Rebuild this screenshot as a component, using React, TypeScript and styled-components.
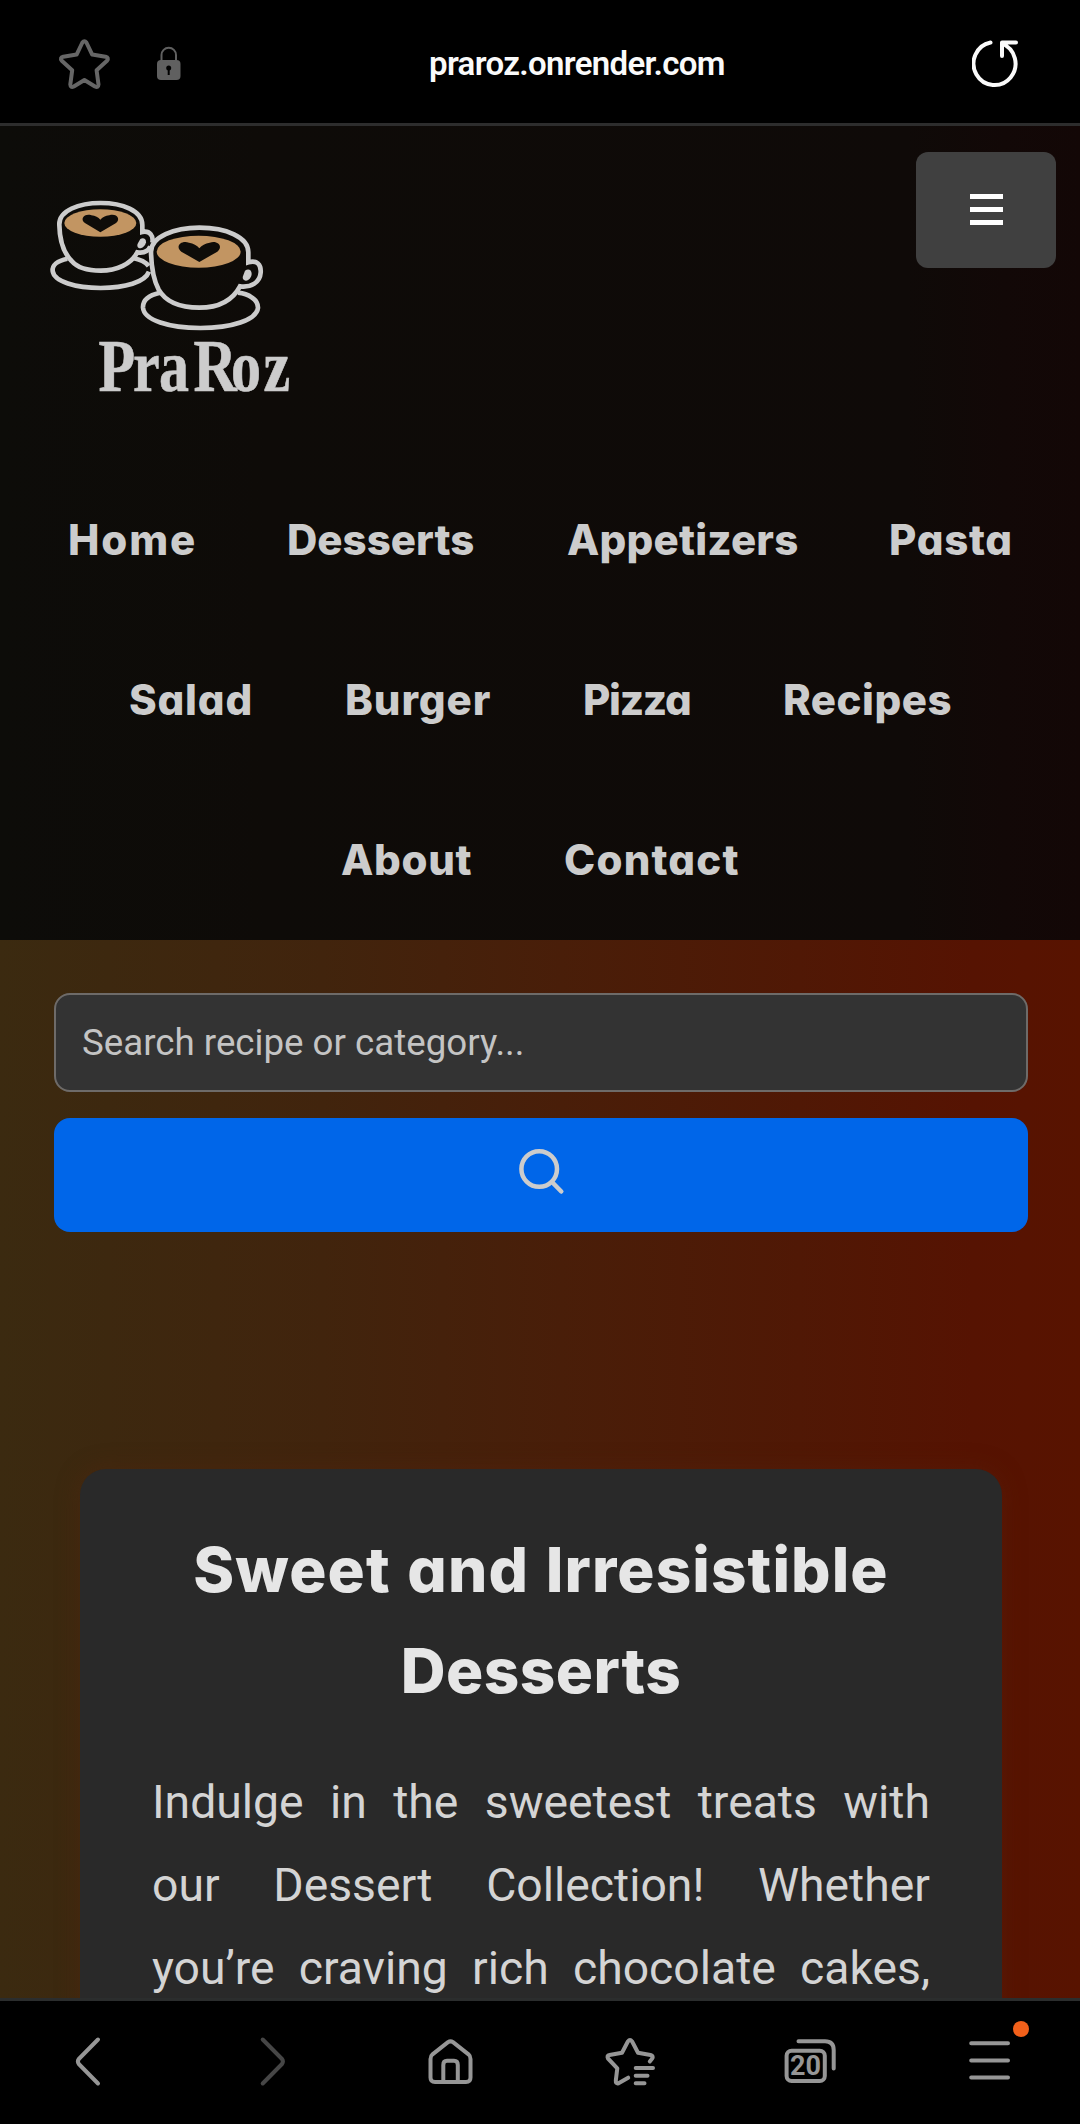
import React from 'react';
import styled, { createGlobalStyle } from 'styled-components';

const Global = createGlobalStyle`
  * { box-sizing: border-box; }
  body { margin: 0; background: #000; font-family: Roboto, sans-serif; }
`;

const Screen = styled.div`
  width: 1080px; height: 2124px; overflow: hidden;
  display: flex; flex-direction: column; background: #000;
`;

const AddressBar = styled.header`
  height: 126px; flex: none; display: grid;
  grid-template-columns: 156px 198px 1fr 198px;
  align-items: center; border-bottom: 3px solid #2d2d2d;
`;
const StarCell = styled.span`display: flex; padding: 4px 0 0 56px;`;
const LockCell = styled.span`display: flex; padding-top: 4px;`;
const Url = styled.div`
  padding-left: 75px; padding-top: 4px; white-space: nowrap;
  font: 600 33px/40px Roboto, sans-serif; color: #fafafa; letter-spacing: -0.65px;
`;
const ReloadCell = styled.span`display: flex; padding: 3px 0 0 90px;`;

const Page = styled.main`
  flex: 1; min-height: 0; overflow: hidden;
  background: linear-gradient(90deg, #3b2a10 0%, #41240d 30%, #491e09 52%, #501805 74%, #561302 90%, #581300 100%);
`;
const SiteHeader = styled.section`
  height: 814px; display: flex; flex-direction: column;
  background: linear-gradient(90deg, #0d0c09 0%, #0e0b08 25%, #0f0a08 84%, #120807 93%, #130706 100%);
`;
const Brand = styled.div`
  display: flex; justify-content: space-between; align-items: flex-start;
  height: 334px; padding: 26px 24px 0 30px;
`;
const LogoWrap = styled.div`padding-top: 28px;`;
const MenuButton = styled.button`
  width: 140px; height: 116px; border: 0; border-radius: 12px; background: #404040;
  display: flex; flex-direction: column; align-items: center; gap: 8px; padding: 42px 0 0;
`;
const MenuLine = styled.span`width: 33px; height: 5px; background: #fff;`;

const Nav = styled.nav`display: flex; flex-direction: column;`;
const NavRow = styled.div<{ $left: number }>`
  display: flex; height: 160px; align-items: center; padding-left: ${p => p.$left}px;
`;
const NavLink = styled.a<{ $w: number; $ls?: number }>`
  width: ${p => p.$w}px; flex: none; white-space: nowrap; color: #cccccc;
  font: 800 42px/64px Inter, sans-serif; font-feature-settings: "cv11";
  letter-spacing: ${p => p.$ls ?? 0}px;
`;

const Search = styled.form`
  display: flex; flex-direction: column; gap: 26px; padding: 53px 52px 0 54px;
`;
const Input = styled.input`
  width: 100%; height: 99px; border: 2px solid #6e6b69; border-radius: 16px;
  background: #333; padding: 0 26px; color: #ccc; outline: none;
  font: 400 36.7px/44px Roboto, sans-serif;
  &::placeholder { color: #c4c4c4; opacity: 1; }
`;
const SearchButton = styled.button`
  height: 114px; border: 0; border-radius: 16px; background: #0066e9;
  display: flex; justify-content: center; padding: 28px 0 0;
`;

const Card = styled.article`
  margin: 237px 78px 0 80px; height: 560px; border-radius: 26px 26px 0 0;
  background: #292929; padding: 50px 72px 0; box-shadow: 0 0 24px rgba(90, 38, 16, 0.4);
`;
const Title = styled.h2`
  margin: 0; text-align: center; color: #e6e6e6; white-space: nowrap;
  font: 800 62px/101px Inter, sans-serif; font-feature-settings: "cv11"; letter-spacing: 0.5px;
`;
const TitleLead = styled.span`letter-spacing: 1.1px; word-spacing: 2px;`;
const Copy = styled.p`margin: 40px 0 0; color: #d4d4d4; font: 400 46.3px/83px Roboto, sans-serif;`;
const Line = styled.span`display: block; text-align: justify; text-align-last: justify; white-space: nowrap;`;

const Toolbar = styled.footer`
  height: 126px; flex: none; border-top: 3px solid #2b2d2d; display: grid;
  grid-template-columns: repeat(6, 180px); align-items: start; padding-top: 30px;
`;
const ToolSlot = styled.span<{ $color?: string }>`
  position: relative; display: flex; justify-content: center; color: ${p => p.$color ?? '#969696'};
`;
const Notice = styled.i`
  position: absolute; left: 113px; top: -10px; width: 16px; height: 16px;
  border-radius: 50%; background: #f2601a;
`;

function ToolIcon({ children }: { children: React.ReactNode }) {
  return (
    <svg width="60" height="60" viewBox="0 0 60 60" fill="none" stroke="currentColor" strokeWidth="4" strokeLinecap="round" strokeLinejoin="round">
      {children}
    </svg>
  );
}

function Logo() {
  return (
    <svg width="290" height="230" viewBox="0 0 870 690" fill="none" stroke="#ccc" strokeWidth="14">
      <path d="M112 236C82 242 66 256 68 273C72 305 138 324 212 324C285 324 345 307 357 275M308 234C330 238 347 246 356 258" />
      <path d="M88 135C86 91 148 69 212 69C277 69 337 92 337 135V156C360 151 371 168 367 188M88 135C89 190 107 225 125 243C142 263 176 272 212 272C260 272 304 252 322 217C344 220 356 211 361 199" />
      <path d="M331 177c9-5 18 0 17 10-1 9-8 16-16 18-8 1-12-7-9-14z" fill="#ccc" stroke="none" />
      <ellipse cx="211" cy="129" rx="108" ry="41" fill="#c29562" stroke="none" />
      <path d="M211 157L166 130C147 118 164 99 184 106Q202 108 211 119Q220 108 238 106C260 99 274 118 257 130Z" fill="#0e0c09" stroke="none" />
      <path d="M390 338C357 345 338 361 339 383C342 421 417 444 511 444C604 444 680 420 684 383C684 359 656 341 624 338" />
      <path d="M363 216C362 171 433 143 508 143C588 143 656 171 655 218V247C680 239 694 253 692 278C690 307 664 323 630 319C612 353 577 383 508 383C444 383 406 364 386 329C372 302 364 266 363 216Z" />
      <path d="M645 272c10-7 20-2 20 9 0 10-8 20-17 21-9 0-12-8-8-16z" fill="#ccc" stroke="none" />
      <ellipse cx="506" cy="215" rx="126" ry="48" fill="#c29562" stroke="none" />
      <path d="M508 246L454 215C435 201 451 180 477 188Q497 191 508 205Q519 191 539 188C565 180 580 201 562 215Z" fill="#0e0c09" stroke="none" />
      <text transform="scale(0.8 1)" x="257 386 484 613 754 876" y="633" fill="#ccc" stroke="#ccc" strokeWidth="2" fontFamily="Liberation Serif, serif" fontWeight="700" fontSize="225">PraRoz</text>
    </svg>
  );
}

const navRows = [
  { left: 68, items: [['Home', 219, 1.9], ['Desserts', 280, 0], ['Appetizers', 322, 0.2], ['Pasta', 130, 0.7]] },
  { left: 129, items: [['Salad', 216, 0.8], ['Burger', 238, 0.9], ['Pizza', 200, -1.3], ['Recipes', 180, 0.5]] },
  { left: 341, items: [['About', 223, 0.7], ['Contact', 190, 1.2]] },
] as { left: number; items: [string, number, number?][] }[];

export default function App() {
  return (
    <Screen>
      <Global />
      <AddressBar>
        <StarCell>
          <svg width="56" height="56" viewBox="0 0 56 56" fill="none" stroke="#666" strokeWidth="4" strokeLinejoin="round">
            <path d="M26.400 6.500Q28.400 3.800 30.400 6.500L36.200 18.600L49.500 20.700Q53.300 21.800 51 24.700L40.600 34.200L42.500 48.500Q42.300 52 39 50.500L28.400 44L17.800 50.500Q14.500 52 14.300 48.500L16.200 34.200L5.800 24.700Q3.500 21.800 7.300 20.700L20.600 18.600Z" />
          </svg>
        </StarCell>
        <LockCell>
          <svg width="26" height="36" viewBox="0 0 26 36"><path d="M5.500 15V9a7.200 7.200 0 0 1 14.500 0v6" fill="none" stroke="#606060" strokeWidth="2" /><rect x="1" y="14" width="23.500" height="20" rx="4" fill="#606060" /><circle cx="12.700" cy="22" r="2.500" /><path d="M11.700 22h2v7h-2z" /></svg>
        </LockCell>
        <Url>praroz.onrender.com</Url>
        <ReloadCell>
          <svg width="48" height="50" viewBox="0 0 48 50" fill="none" stroke="#fafafa" strokeWidth="4" strokeLinecap="round" strokeLinejoin="round"><path d="M18.500 4.500A21 21.500 0 1 0 30 5.500M30 18V4.500H44" /></svg>
        </ReloadCell>
      </AddressBar>
      <Page>
        <SiteHeader>
          <Brand>
            <LogoWrap><Logo /></LogoWrap>
            <MenuButton aria-label="Menu"><MenuLine /><MenuLine /><MenuLine /></MenuButton>
          </Brand>
          <Nav>
            {navRows.map(r => (
              <NavRow key={r.left} $left={r.left}>
                {r.items.map(([t, w, ls]) => <NavLink key={t} $w={w} $ls={ls}>{t}</NavLink>)}
              </NavRow>
            ))}
          </Nav>
        </SiteHeader>
        <Search>
          <Input placeholder="Search recipe or category..." />
          <SearchButton type="button" aria-label="Search">
            <svg width="48" height="50" viewBox="0 0 48 50" fill="none" stroke="#ccc" strokeWidth="4.500" strokeLinecap="round"><circle cx="22.200" cy="23" r="17.800" /><path d="M35 36L44.300 45.500" /></svg>
          </SearchButton>
        </Search>
        <Card>
          <Title><TitleLead>Sweet and Irresistible</TitleLead><br />Desserts</Title>
          <Copy>
            <Line>Indulge in the sweetest treats with</Line>
            <Line>our Dessert Collection! Whether</Line>
            <Line>you’re craving rich chocolate cakes,</Line>
          </Copy>
        </Card>
      </Page>
      <Toolbar>
        <ToolSlot><ToolIcon><path d="M38 8.500L18.800 28Q17 30.500 18.800 33L38 52.500" /></ToolIcon></ToolSlot>
        <ToolSlot $color="#464646"><ToolIcon><path d="M22.700 8.500L42 28Q43.800 30.500 42 33L22.700 52.500" /></ToolIcon></ToolSlot>
        <ToolSlot>
          <ToolIcon>
            <path d="M10.500 30V28Q10.500 25 12.500 23.300L28 11.200Q30.500 9.500 33 11.200L48.500 23.300Q50.500 25 50.500 28V46.500Q50.500 51 46 51H15Q10.500 51 10.500 46.500Z" />
            <path d="M23.300 51V34Q23.300 29.800 27 29.800H34Q37.800 29.800 37.800 34V51" />
          </ToolIcon>
        </ToolSlot>
        <ToolSlot>
          <ToolIcon>
            <path d="M28.200 46.700L18.500 52.300Q15.500 53 15.800 49.500L17.300 37.300L8 27.500Q6.500 24.500 9.500 24L22 21.800L28 10.300Q30 7.500 32 10.300L38 21.800L50.500 24Q54 25 52 27.800L49.800 30.500" />
            <path d="M35.700 37H53M35.700 44.700H47.500M35.700 52.300H44.500" />
          </ToolIcon>
        </ToolSlot>
        <ToolSlot>
          <ToolIcon>
            <rect x="6.600" y="19.700" width="38.200" height="30.300" rx="5" />
            <path d="M18.500 10.300H45Q53.700 10.300 53.700 19V37.500" />
            <text x="25.600" y="44.300" textAnchor="middle" fill="currentColor" stroke="none" fontFamily="Roboto, sans-serif" fontWeight="700" fontSize="27">20</text>
          </ToolIcon>
        </ToolSlot>
        <ToolSlot>
          <ToolIcon><path d="M11.200 12.300H48M11.200 29.500H48M11.200 46.600H48" /></ToolIcon>
          <Notice />
        </ToolSlot>
      </Toolbar>
    </Screen>
  );
}
